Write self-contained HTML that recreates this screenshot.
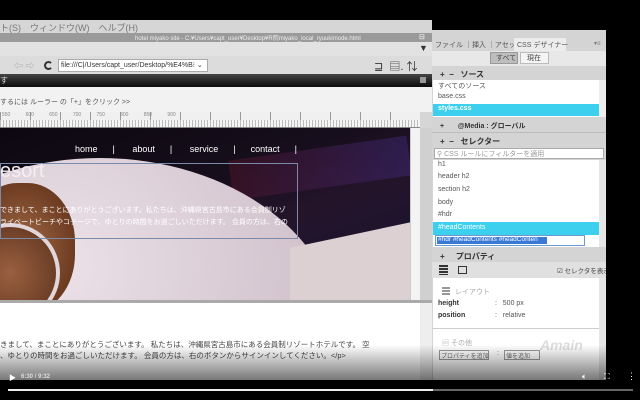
<!DOCTYPE html>
<html><head><meta charset="utf-8"><style>
*{margin:0;padding:0;box-sizing:border-box}
html,body{width:640px;height:400px;overflow:hidden}
body{background:#000;position:relative;font-family:"Liberation Sans","Noto Sans CJK JP",sans-serif;font-size:8px;color:#333}
.a{position:absolute}
.t{position:absolute;white-space:nowrap}
</style></head><body>
<div class="a" style="left:0;top:20px;width:432px;height:360px;background:#d6d6d6"></div>
<div class="t" style="left:0;top:21px;font-size:9px;color:#777">ト(S)　ウィンドウ(W)　ヘルプ(H)</div>
<div class="a" style="left:0;top:33px;width:432px;height:9px;background:#9a9a9a"></div>
<div class="t" style="left:135px;top:33px;font-size:6px;color:#eee">hotel miyako site - C:¥Users¥capt_user¥Desktop¥R院miyako_local_ryuukimode.html</div>
<div class="t" style="left:419px;top:33px;font-size:7px;color:#fff">⊟</div>
<div class="a" style="left:0;top:42px;width:432px;height:14px;background:#e2e2e2"></div>
<div class="t" style="left:419px;top:43px;font-size:9px;color:#333">▼</div>
<div class="a" style="left:0;top:56px;width:432px;height:18px;background:#dcdcdc"></div>
<div class="t" style="left:14px;top:59px;font-size:9px;color:#aaa">⇦ ⇨</div>
<div class="a" style="left:44px;top:61px;width:9px;height:9px;border:2px solid #333;border-radius:50%;border-right-color:transparent"></div>
<div class="a" style="left:58px;top:59px;width:150px;height:13px;background:#fff;border:1px solid #aaa"></div>
<div class="t" style="left:61px;top:61px;font-size:7px;color:#333">file:///C|/Users/capt_user/Desktop/%E4%B⁝ ⌄</div>
<div class="t" style="left:374px;top:58px;font-size:11px;color:#333">⊒ &nbsp;▤. ⇅</div>
<div class="a" style="left:0;top:74px;width:432px;height:13px;background:linear-gradient(#444,#0c0c0c)"></div>
<div class="t" style="left:0;top:75px;font-size:8px;color:#ddd">す</div>
<div class="a" style="left:420px;top:77px;width:6px;height:6px;background:#999"></div>
<div class="a" style="left:0;top:87px;width:432px;height:25px;background:#f2f2f2"></div>
<div class="t" style="left:0;top:97px;font-size:7px;color:#555">するには ルーラー の「+」をクリック &gt;&gt;</div>
<div class="a" style="left:0;top:112px;width:420px;height:16px;background:repeating-linear-gradient(90deg,#bbb 0 1px,#f6f6f6 1px 3px);border-bottom:1px solid #888"></div>
<div class="a" style="left:0;top:112px;width:420px;height:8px;background:repeating-linear-gradient(90deg,#999 0 1px,#f0f0f0 1px 30px)"></div>
<div class="t" style="left:2px;top:112px;font-size:5px;color:#888;letter-spacing:0">550&nbsp;&nbsp;&nbsp;&nbsp;&nbsp;&nbsp;&nbsp;&nbsp;&nbsp;&nbsp;&nbsp;600&nbsp;&nbsp;&nbsp;&nbsp;&nbsp;&nbsp;&nbsp;&nbsp;&nbsp;&nbsp;&nbsp;650&nbsp;&nbsp;&nbsp;&nbsp;&nbsp;&nbsp;&nbsp;&nbsp;&nbsp;&nbsp;&nbsp;700&nbsp;&nbsp;&nbsp;&nbsp;&nbsp;&nbsp;&nbsp;&nbsp;&nbsp;&nbsp;&nbsp;750&nbsp;&nbsp;&nbsp;&nbsp;&nbsp;&nbsp;&nbsp;&nbsp;&nbsp;&nbsp;&nbsp;800&nbsp;&nbsp;&nbsp;&nbsp;&nbsp;&nbsp;&nbsp;&nbsp;&nbsp;&nbsp;&nbsp;850&nbsp;&nbsp;&nbsp;&nbsp;&nbsp;&nbsp;&nbsp;&nbsp;&nbsp;&nbsp;&nbsp;900</div>
<!-- design view -->
<div class="a" style="left:0;top:128px;width:410px;height:172px;background:linear-gradient(160deg,#0c0810 0%,#160e1c 40%,#24142a 60%,#161432 100%);overflow:hidden">
 <div class="a" style="left:230px;top:20px;width:180px;height:40px;background:linear-gradient(100deg,rgba(80,20,40,.5),rgba(60,40,120,.5));transform:rotate(-8deg)"></div>
 <div class="a" style="left:-140px;top:30px;width:480px;height:360px;border-radius:50%;background:radial-gradient(ellipse at 40% 30%,#ece2e8,#d3c4ce 60%,#bca8b6)"></div>
 <div class="a" style="left:290px;top:105px;width:140px;height:80px;background:#dcd0d2;transform:skewY(-12deg)"></div>
 <div class="a" style="left:-30px;top:55px;width:105px;height:130px;border-radius:45%;background:radial-gradient(#a06a45,#6e3c22 70%,#4a2515)"></div>
 <div class="a" style="left:-40px;top:95px;width:100px;height:100px;border-radius:50%;border:4px solid #e2d6da;background:radial-gradient(#9a6040,#5a301c)"></div>
 <div class="a" style="left:0;top:35px;width:298px;height:76px;border:1px solid #7a8aa8"></div>
</div>
<div class="t" style="left:0;top:160px;font-size:20px;color:#f4eef0;font-family:'Liberation Sans Narrow','Liberation Sans',sans-serif">esort</div>
<div class="t" style="left:0;top:205px;font-size:7px;color:#fff">できまして、まことにありがとうございます。私たちは、沖縄県宮古島市にある会員制リゾ</div>
<div class="t" style="left:0;top:217px;font-size:7px;color:#fff">ライベートビーチやコテージで、ゆとりの時間をお過ごしいただけます。 会員の方は、右の</div>
<div class="t" style="left:75px;top:144px;font-size:9px;color:#fff;font-family:'Liberation Sans Narrow','Liberation Sans',sans-serif">home&nbsp;&nbsp;&nbsp;&nbsp;&nbsp;&nbsp;|&nbsp;&nbsp;&nbsp;&nbsp;&nbsp;&nbsp;&nbsp;about&nbsp;&nbsp;&nbsp;&nbsp;&nbsp;&nbsp;|&nbsp;&nbsp;&nbsp;&nbsp;&nbsp;&nbsp;&nbsp;service&nbsp;&nbsp;&nbsp;&nbsp;&nbsp;&nbsp;|&nbsp;&nbsp;&nbsp;&nbsp;&nbsp;&nbsp;contact&nbsp;&nbsp;&nbsp;&nbsp;&nbsp;&nbsp;|</div>
<div class="a" style="left:410px;top:128px;width:10px;height:172px;background:#f3f3f3;border-left:1px solid #ccc"></div>
<div class="a" style="left:420px;top:128px;width:12px;height:172px;background:#d0d0d0"></div>
<div class="a" style="left:0;top:300px;width:432px;height:3px;background:#aaa"></div>
<div class="a" style="left:0;top:303px;width:432px;height:77px;background:#fff"></div>
<div class="a" style="left:420px;top:303px;width:12px;height:77px;background:#eee"></div>
<div class="t" style="left:0;top:339px;font-size:7.5px;color:#444">きまして、まことにありがとうございます。 私たちは、沖縄県宮古島市にある会員制リゾートホテルです。 空</div>
<div class="t" style="left:0;top:350px;font-size:7.5px;color:#444">、ゆとりの時間をお過ごしいただけます。 会員の方は、右のボタンからサインインしてください。&lt;/p&gt;</div>
<!-- right panel -->
<div class="a" style="left:432px;top:30px;width:174px;height:350px;background:#d4d4d4;overflow:hidden">
<div class="t" style="left:3px;top:10px;font-size:7px;color:#555">ファイル ｜挿入 ｜アセット</div>
<div class="a" style="left:82px;top:8px;width:52px;height:13px;background:#ececec"></div>
<div class="t" style="left:85px;top:10px;font-size:7px;color:#555">CSS デザイナー</div>
<div class="t" style="left:162px;top:10px;font-size:6px;color:#777">▾≡</div>
<div class="a" style="left:0;top:21px;width:174px;height:15px;background:#e8e8e8"></div>
<div class="a" style="left:58px;top:22px;width:28px;height:12px;background:#bdbdbd;border:1px solid #999"></div>
<div class="a" style="left:88px;top:22px;width:29px;height:12px;background:#f4f4f4;border:1px solid #bbb"></div>
<div class="t" style="left:64px;top:23px;font-size:7px;color:#444">すべて</div>
<div class="t" style="left:95px;top:23px;font-size:7px;color:#444">現在</div>
<div class="t" style="left:8px;top:39px;font-size:8px;color:#333;font-weight:bold">+ &nbsp;− &nbsp;&nbsp;ソース</div>
<div class="a" style="left:1px;top:50px;width:166px;height:37px;background:#fff"></div>
<div class="t" style="left:6px;top:51px;font-size:7px;color:#555">すべてのソース</div>
<div class="t" style="left:6px;top:63px;font-size:7px;color:#555">base.css</div>
<div class="a" style="left:1px;top:74px;width:166px;height:12px;background:#3ccfee"></div>
<div class="t" style="left:6px;top:75px;font-size:7px;color:#fff;font-weight:bold">styles.css</div>
<div class="a" style="left:167px;top:50px;width:7px;height:37px;background:#eee"></div>
<div class="t" style="left:8px;top:91px;font-size:7px;color:#333;font-weight:bold">+ &nbsp;&nbsp;&nbsp;&nbsp;&nbsp;&nbsp;@Media : グローバル</div>
<div class="a" style="left:0;top:102px;width:174px;height:1px;background:#bbb"></div>
<div class="t" style="left:8px;top:106px;font-size:8px;color:#333;font-weight:bold">+ &nbsp;− &nbsp;&nbsp;セレクター</div>
<div class="a" style="left:2px;top:118px;width:170px;height:11px;background:#fff;border:1px solid #aaa"></div>
<div class="t" style="left:5px;top:119px;font-size:7px;color:#999">⚲ CSS ルールにフィルターを適用</div>
<div class="a" style="left:1px;top:130px;width:166px;height:87px;background:#fff"></div>
<div class="t" style="left:6px;top:131px;font-size:7px;color:#555">h1</div>
<div class="t" style="left:6px;top:143px;font-size:7px;color:#555">header h2</div>
<div class="t" style="left:6px;top:156px;font-size:7px;color:#555">section h2</div>
<div class="t" style="left:6px;top:169px;font-size:7px;color:#555">body</div>
<div class="t" style="left:6px;top:181px;font-size:7px;color:#555">#hdr</div>
<div class="a" style="left:1px;top:192px;width:166px;height:13px;background:#3ccfee"></div>
<div class="t" style="left:6px;top:194px;font-size:7px;color:#fff">#headContents</div>
<div class="a" style="left:3px;top:205px;width:150px;height:11px;background:#fff;border:1px solid #6a9ad0"></div>
<div class="a" style="left:5px;top:207px;width:110px;height:7px;background:#3a78d6"></div>
<div class="t" style="left:6px;top:206px;font-size:6.5px;color:#fff">#hdr #headContents #headConten</div>
<div class="a" style="left:167px;top:130px;width:7px;height:87px;background:#e6e6e6"></div>
<div class="t" style="left:8px;top:221px;font-size:8px;color:#333;font-weight:bold">+ &nbsp;&nbsp;&nbsp;&nbsp;プロパティ</div>
<div class="a" style="left:0;top:232px;width:174px;height:16px;background:#e0e0e0"></div>
<div class="a" style="left:7px;top:235px;width:9px;height:10px;background:repeating-linear-gradient(#333 0 2px,#ddd 2px 3px)"></div>
<div class="a" style="left:26px;top:236px;width:9px;height:8px;border:1px solid #333"></div>
<div class="t" style="left:125px;top:235px;font-size:6.5px;color:#444">☑ セレクタを表示</div>
<div class="a" style="left:1px;top:248px;width:166px;height:102px;background:#fff"></div>
<div class="a" style="left:10px;top:257px;width:8px;height:9px;background:repeating-linear-gradient(#999 0 2px,#fff 2px 3px)"></div>
<div class="t" style="left:23px;top:257px;font-size:7px;color:#aaa">レイアウト</div>
<div class="t" style="left:6px;top:270px;font-size:7px;color:#333;font-weight:bold">height</div>
<div class="t" style="left:63px;top:270px;font-size:7px;color:#555">:&nbsp;&nbsp;&nbsp;500 px</div>
<div class="t" style="left:6px;top:282px;font-size:7px;color:#333;font-weight:bold">position</div>
<div class="t" style="left:63px;top:282px;font-size:7px;color:#555">:&nbsp;&nbsp;&nbsp;relative</div>
<div class="a" style="left:1px;top:298px;width:166px;height:1px;background:#ccc"></div>
<div class="t" style="left:10px;top:308px;font-size:7px;color:#aaa">▤ その他</div>
<div class="a" style="left:7px;top:320px;width:50px;height:10px;border:1px solid #999"></div>
<div class="t" style="left:9px;top:321px;font-size:6px;color:#666">プロパティを追加</div>
<div class="t" style="left:65px;top:320px;font-size:7px;color:#666">:</div>
<div class="a" style="left:72px;top:320px;width:36px;height:10px;border:1px solid #999"></div>
<div class="t" style="left:74px;top:321px;font-size:6px;color:#666">値を追加</div>
<div class="t" style="left:108px;top:307px;font-size:14px;color:#ddd;font-weight:bold;font-style:italic">Amain</div>
<div class="a" style="left:167px;top:248px;width:7px;height:102px;background:#e6e6e6"></div>
</div>
<!-- video overlay -->
<div class="a" style="left:0;top:345px;width:640px;height:36px;background:linear-gradient(rgba(0,0,0,0),rgba(0,0,0,.55))"></div>
<div class="a" style="left:0;top:380px;width:640px;height:20px;background:#000"></div>
<div class="t" style="left:9px;top:373px;font-size:7px;color:#fff">▶</div>
<div class="t" style="left:21px;top:374px;font-size:6px;color:#ddd;font-weight:bold">6:30 / 9:32</div>
<div class="a" style="left:8px;top:389px;width:625px;height:2px;background:#666"></div>
<div class="a" style="left:8px;top:389px;width:425px;height:2px;background:#eee"></div>
<div class="t" style="left:582px;top:372px;font-size:8px;color:#fff">🔈︎</div>
<div class="t" style="left:604px;top:372px;font-size:8px;color:#fff">⛶</div>
<div class="t" style="left:627px;top:371px;font-size:9px;color:#fff">⋮</div>
</body></html>
